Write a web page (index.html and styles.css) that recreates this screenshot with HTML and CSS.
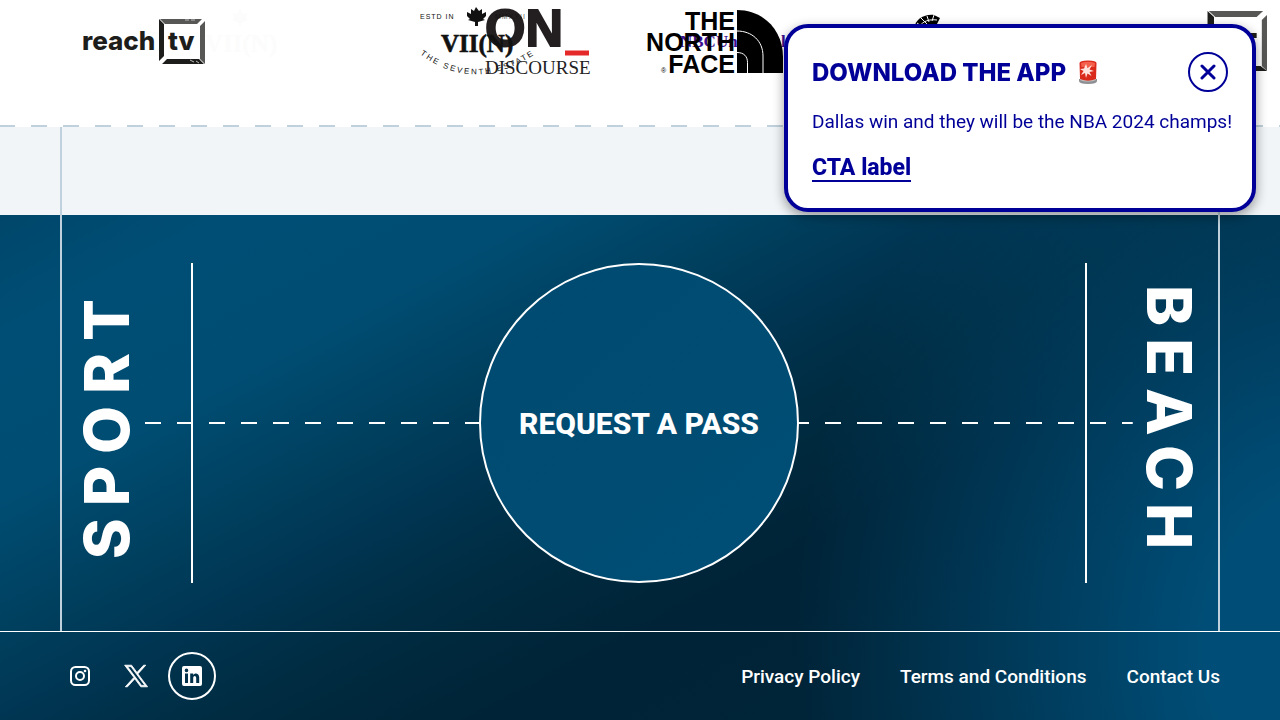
FILE: index.html
```html
<!DOCTYPE html>
<html lang="en">
<head>
<meta charset="utf-8">
<meta name="viewport" content="width=device-width, initial-scale=1">
<title>Sport Beach</title>
<link rel="stylesheet" href="styles.css">
</head>
<body>
<section class="partners" aria-label="Partners">
  <svg class="logo logo-reach" width="337" height="80" viewBox="83 0 337 80" role="img" aria-label="reach tv">
    <g fill="#fcfcfc">
      <text x="205" y="52" class="logo-serif" font-size="25">VII(N)</text>
      <path d="M240 9l3 5 5-1-2 5 2 2-7 3v3h-2v-3l-7-3 2-2-2-5 5 1z"/>
    </g>
    <text x="82" y="50" class="logo-geo" font-size="26" fill="#1d1d1b">reach</text>
    <text x="168" y="50" class="logo-geo" font-size="26" fill="#1d1d1b">tv</text>
    <path fill="#1d1d1b" d="M159 19l5 5v32l-5 5zM167 59h32l5 5h-42z"/>
    <path fill="#575756" d="M160 19h42l-5 5h-32zM205 21v43l-5-5V26z"/>
    <path stroke="#bbb" d="M185 20h4M191 20h4M190 60l4 2M196 61l3 2"/>
  </svg>
  <svg class="logo" width="224" height="80" viewBox="420 0 224 80" role="img" aria-label="VII(N) and ON Discourse">
    <defs><path id="arc" d="M420 54Q478 98 545 47"/></defs>
    <path fill="none" stroke="#e52828" stroke-width="5" d="M565 53h24"/>
    <text x="485" y="46" class="logo-on" font-size="52" fill="#231f20">ON</text>
    <text x="485" y="74" font-family="Liberation Serif, serif" font-size="19" fill="#222">DISCOURSE</text>
    <g fill="#111">
      <text x="420" y="19" font-size="7" class="logo-small">ESTD IN</text>
      <text x="495" y="19" font-size="7" class="logo-small" opacity=".7">MMXXII</text>
      <text x="441" y="52" class="logo-serif" font-size="25" stroke="#111" stroke-width=".6">VII(N)</text>
      <path d="M476 7l3 4 3-2v5l4-2v4l-3 3 2 1-7 2v4h-3v-4l-7-2 2-1-3-3v-4l4 2V9l3 2z"/>
      <text font-size="8" class="logo-arc"><textPath href="#arc">THE SEVENTH ESTATE</textPath></text>
    </g>
  </svg>
  <svg class="logo" width="266" height="80" viewBox="644 0 266 80" role="img" aria-label="The North Face and NBCUniversal">
    <text x="680" y="47" class="logo-serif" font-size="17" fill="#3c0f8f">NBCUniversal</text>
    <g class="logo-face" font-size="25" text-anchor="end">
      <text x="735" y="30">THE</text>
      <text x="735" y="51">NORTH</text>
      <text x="735" y="73">FACE</text>
    </g>
    <text x="661" y="73" font-size="7" font-family="Liberation Sans, sans-serif">®</text>
    <path d="M737 10c27 0 46 21 46 47v16h-46z"/>
    <path fill="none" stroke="#fff" d="M737 31c15 0 26 10 26 25v17M737 52.500c7 0 10.500 4 10.500 10V73"/>
  </svg>
  <svg class="logo" width="198" height="80" viewBox="910 0 198 80" role="img" aria-label="Partner crest">
    <path d="M914 28c2-9 10-14 20-13l6 3-3 6-9 6z"/>
    <path fill="none" stroke="#fff" d="M917 23l7 5M921 18l7 7M927 16l2 6M934 15l-2 6M919 27c4-6 10-8 18-7"/>
  </svg>
  <svg class="logo" width="159" height="80" viewBox="82 -6 123 80" preserveAspectRatio="none" aria-hidden="true">
    <path fill="#1d1d1b" d="M159 5l5 6v48l-5 6zM165 60h35l5 5h-43z"/>
    <path fill="#575756" d="M160 5h42l-5 6h-32zM205 9v56l-4-5V14z"/>
    <path fill="#1d1d1b" d="M190 27h7v5h-7z"/>
  </svg>
</section>
<main class="pitch">
  <div class="spacer"></div>
  <div class="deep">
    <section class="court">
      <span class="word word-up">SPORT</span>
      <div class="field">
        <div class="lines">
          <button class="pass" type="button">REQUEST A PASS</button>
        </div>
      </div>
      <span class="word word-down">BEACH</span>
    </section>
    <footer class="footer">
      <nav class="social" aria-label="Social media">
        <a href="#" class="social-link" aria-label="Instagram">
          <svg width="24" height="24" viewBox="0 0 24 24" fill="none" stroke="#fff" stroke-width="2"><rect x="3" y="3" width="18" height="18" rx="4.500"/><circle cx="12" cy="12" r="4"/><circle cx="17" cy="7" r="1.300" fill="#fff" stroke="none"/></svg>
        </a>
        <a href="#" class="social-link" aria-label="X">
          <svg width="24" height="24" viewBox="0 0 24 24" fill="#fff" stroke="#fff" stroke-width=".8"><path fill-rule="evenodd" d="M.6 1.200h7l5.400 7.300 6.600-7.300h2.200l-7.900 8.700L23.600 22.800h-6.800l-6-8L3.500 22.800H1.300l8.600-9.400zM3.500 2.600l14 18.800h3.400L7 2.600z"/></svg>
        </a>
        <a href="#" class="social-link is-active" aria-label="LinkedIn">
          <svg width="24" height="24" viewBox="0 0 24 24" fill="#fff"><path fill-rule="evenodd" d="M4 2h16a2 2 0 0 1 2 2v16a2 2 0 0 1-2 2H4a2 2 0 0 1-2-2V4a2 2 0 0 1 2-2zM5 9.500V19h3V9.500zM6.500 4.600a1.800 1.800 0 1 0 0 3.600 1.800 1.800 0 0 0 0-3.600zM10.200 9.500V19h3v-5c0-2.700 3-2.800 3 0v5h3v-5.700c0-4.600-4.700-4.800-6-2.300V9.500z"/></svg>
        </a>
      </nav>
      <nav class="legal" aria-label="Legal">
        <a href="#">Privacy Policy</a>
        <a href="#">Terms and Conditions</a>
        <a href="#">Contact Us</a>
      </nav>
    </footer>
  </div>
</main>
<aside class="notice" aria-labelledby="notice-title">
  <div class="notice-head">
    <h2 class="notice-title" id="notice-title">DOWNLOAD THE APP
      <svg width="20" height="24" viewBox="0 0 20 24" aria-hidden="true">
        <path fill="#8d8f92" d="M1 19h18v2q0 3-9 3t-9-3z"/>
        <path fill="#c9c9c9" d="M2 18h16v2q-8 3-16 0z"/>
        <path fill="#d92a1c" d="M1.500 3q0-2.500 8.500-2.500T18.500 3L18 19q-8 3.500-16 0z"/>
        <path fill="#f4604c" d="M3 3q7-2.500 14 0l-.5 4h-13z"/>
        <path fill="#ffe3dc" d="M8 4l1.500 4L14 5l-2.500 4.500L16 11l-4.500 1 2 4-4-2.500L8 18l-1-5-4 2 2.500-4L2 9l4-.5z"/>
      </svg>
    </h2>
    <button class="close" type="button" aria-label="Close">
      <svg width="16" height="16" viewBox="0 0 16 16" fill="none" stroke="currentColor" stroke-width="3" stroke-linecap="round"><path d="M2 2l12 12M14 2L2 14"/></svg>
    </button>
  </div>
  <p class="notice-text">Dallas win and they will be the NBA 2024 champs!</p>
  <a class="notice-cta" href="#">CTA label</a>
</aside>
</body>
</html>
```
FILE: styles.css
```css
* {
  box-sizing: border-box;
}

body {
  margin: 0;
  background: #fff;
  color: #fff;
  font-family: Roboto, "Liberation Sans", sans-serif;
}

a {
  color: inherit;
  text-decoration: none;
}

button {
  padding: 0;
  font: inherit;
  cursor: pointer;
}

.partners {
  display: flex;
  height: 127px;
  padding-left: 83px;
  overflow: hidden;
  background: repeating-linear-gradient(to right, #bfd1dc 0 16px, transparent 16px 32px) -1px 100% / 110% 2px no-repeat;
}

.logo {
  flex: none;
}

.logo-geo {
  font-family: Inter, sans-serif;
  font-weight: 800;
}

.logo-on {
  font-family: "Liberation Sans", sans-serif;
  font-weight: 700;
  stroke: #231f20;
  stroke-width: 2px;
}

.logo-serif {
  font-family: "Liberation Serif", serif;
  font-weight: 700;
}

.logo-small,
.logo-arc {
  font-family: "Liberation Sans", sans-serif;
  letter-spacing: 1px;
}

.logo-arc {
  letter-spacing: 2px;
}

.logo-face {
  font-family: "Liberation Sans", sans-serif;
  font-weight: 700;
}

.pitch {
  position: relative;
}

.spacer {
  height: 88px;
  background: #f1f5f8;
}

.deep {
  background:
    radial-gradient(42% 130% at 104% 85%, #004e78 0%, #004e78 22%, rgba(0, 78, 120, 0) 100%),
    linear-gradient(152deg, #00466a 0%, #004e75 10%, #004d73 24%, #00405f 35%, #003450 44%, #002b40 53%, #002337 64%, #002539 100%);
}

.court {
  display: flex;
  align-items: center;
  padding: 48px 60px;
}

/* Touchlines running from the pale band down to the footer */
.court::before {
  content: "";
  position: absolute;
  top: 0;
  bottom: 89px;
  left: 60px;
  right: 60px;
  border: solid #bfd1dc;
  border-width: 0 2px;
  pointer-events: none;
}

.word {
  writing-mode: vertical-rl;
  line-height: 70px;
  font-family: Inter, sans-serif;
  font-size: 62px;
  font-weight: 800;
  letter-spacing: 12px;
}

.word-up {
  padding: 0 12px 0 3px;
  transform: rotate(180deg);
}

.word-down {
  padding: 0 16px 0 1px;
}

.field {
  flex: 1;
  padding: 0 46px;
  background:
    repeating-linear-gradient(to right, #fff 0 16px, transparent 16px 32px) left center / 50% 2px no-repeat,
    repeating-linear-gradient(to right, #fff 0 16px, transparent 16px 32px) calc(50% + 199px) center / 90px 2px no-repeat,
    repeating-linear-gradient(to right, #fff 0 16px, transparent 16px 32px) right center / 27% 2px no-repeat;
}

.lines {
  display: flex;
  justify-content: center;
  border: solid #fff;
  border-width: 0 2px;
}

.pass {
  width: 320px;
  height: 320px;
  border: 2px solid #fff;
  border-radius: 50%;
  background: linear-gradient(140deg, #004a70, #004e76);
  color: #fff;
  font-size: 30px;
  font-weight: 800;
}

.footer {
  display: flex;
  justify-content: space-between;
  align-items: center;
  padding: 20px 60px 20px 56px;
  border-top: 1px solid #fff;
}

.social {
  display: flex;
  gap: 8px;
}

.social-link {
  display: grid;
  place-items: center;
  width: 48px;
  height: 48px;
  border: 2px solid transparent;
  border-radius: 50%;
}

.social-link.is-active {
  border-color: #fff;
}

.legal {
  display: flex;
  gap: 40px;
  font-size: 19px;
  font-weight: 500;
}

.notice {
  position: fixed;
  top: 24px;
  right: 24px;
  width: 472px;
  padding: 24px;
  border: 4px solid #009;
  border-radius: 24px;
  background: #fff;
  box-shadow: 0 4px 12px rgba(0, 0, 0, 0.4);
  color: #009;
}

.notice-head {
  display: flex;
  justify-content: space-between;
  align-items: center;
}

.notice-title {
  display: flex;
  align-items: center;
  gap: 12px;
  margin: 0;
  font-family: Inter, sans-serif;
  font-size: 24px;
  font-weight: 800;
}

.close {
  display: grid;
  place-items: center;
  width: 40px;
  height: 40px;
  border: 2px solid #009;
  border-radius: 50%;
  background: none;
  color: #009;
}

.notice-text {
  margin: 16px 0 20px;
  font-size: 19px;
  line-height: 28px;
  white-space: nowrap;
}

.notice-cta {
  display: block;
  width: max-content;
  margin-bottom: 2px;
  border-bottom: 2px solid #009;
  font-size: 23px;
  font-weight: 800;
  line-height: 24px;
}
```
